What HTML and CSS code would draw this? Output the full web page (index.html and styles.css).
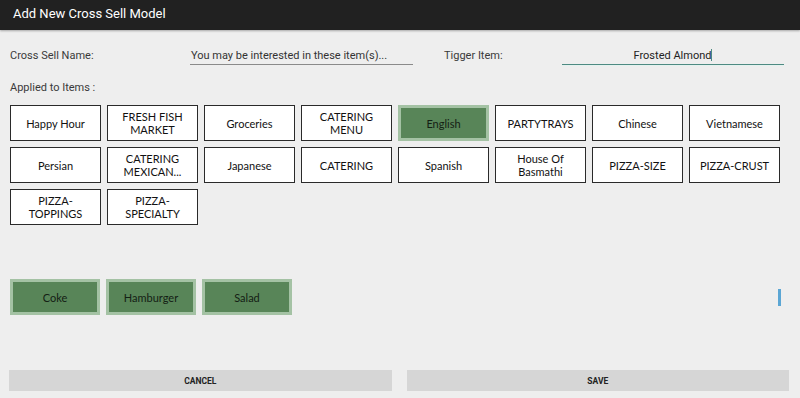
FILE: index.html
```html
<!DOCTYPE html>
<html lang="en">
<head>
    <meta charset="UTF-8">
    <meta name="viewport" content="width=device-width, initial-scale=1.0">
    <title>Add New Cross Sell Model</title>
    <link rel="stylesheet" href="styles.css">
</head>
<body>
    <header class="title-bar">Add New Cross Sell Model</header>

    <div class="form-row">
        <label class="field-label">Cross Sell Name:</label>
        <div class="field name-field">You may be interested in these item(s)...</div>
        <label class="field-label trigger-label">Tigger Item:</label>
        <div class="field trigger-field">Frosted Almond<span class="caret"></span></div>
    </div>

    <div class="section-label">Applied to Items :</div>

    <div class="tile-grid">
        <div class="tile">Happy Hour</div>
        <div class="tile">FRESH FISH MARKET</div>
        <div class="tile">Groceries</div>
        <div class="tile">CATERING MENU</div>
        <div class="tile selected">English</div>
        <div class="tile">PARTYTRAYS</div>
        <div class="tile">Chinese</div>
        <div class="tile">Vietnamese</div>
        <div class="tile">Persian</div>
        <div class="tile">CATERING MEXICAN...</div>
        <div class="tile">Japanese</div>
        <div class="tile">CATERING</div>
        <div class="tile">Spanish</div>
        <div class="tile">House Of Basmathi</div>
        <div class="tile">PIZZA-SIZE</div>
        <div class="tile">PIZZA-CRUST</div>
        <div class="tile">PIZZA-<br>TOPPINGS</div>
        <div class="tile">PIZZA-<br>SPECIALTY</div>
    </div>

    <div class="picked-row">
        <div class="tile selected">Coke</div>
        <div class="tile selected">Hamburger</div>
        <div class="tile selected">Salad</div>
        <span class="scroll-mark"></span>
    </div>

    <div class="footer">
        <button class="action">CANCEL</button>
        <button class="action">SAVE</button>
    </div>
</body>
</html>
```

FILE: styles.css
```css
body {
    margin: 0;
    padding: 0;
    background-color: #eeeeee;
    font-family: Roboto, "Liberation Sans", sans-serif;
    color: #333333;
    height: 398px;
    overflow: hidden;
}
.title-bar {
    height: 30px;
    line-height: 28px;
    background: #212121;
    color: #ffffff;
    font-size: 13px;
    padding-left: 13px;
    box-shadow: 0 1px 2px rgba(0,0,0,0.3);
}
.form-row {
    display: flex;
    align-items: flex-start;
    margin-top: 18px;
    padding-left: 10px;
}
.field-label {
    font-size: 11px;
    width: 180px;
    line-height: 16px;
    color: #3a3a3a;
}
.trigger-label {
    width: 118px;
    margin-left: 31px;
}
.field {
    font-size: 11px;
    line-height: 16px;
    color: #333333;
    width: 222px;
    border-bottom: 1px solid #8a8a8a;
}
.name-field {
    padding-left: 1px;
}
.trigger-field {
    text-align: center;
    color: #222222;
    border-bottom: 1px solid #4e8a82;
    box-shadow: 0 1px 0 #e4f2ef;
}
.caret {
    display: inline-block;
    width: 1px;
    height: 12px;
    background: #4e8a82;
    vertical-align: -2px;
}
.section-label {
    font-size: 11px;
    color: #3a3a3a;
    padding-left: 10px;
    margin-top: 16px;
    line-height: 14px;
}
.tile-grid {
    display: grid;
    grid-template-columns: repeat(8, 91px);
    grid-auto-rows: 36px;
    column-gap: 6px;
    row-gap: 6px;
    padding-left: 10px;
    margin-top: 10px;
}
.tile {
    box-sizing: border-box;
    display: flex;
    align-items: center;
    justify-content: center;
    text-align: center;
    background: #ffffff;
    border: 1px solid #2a2a2a;
    font-family: Lato, "Open Sans", sans-serif;
    font-size: 11px;
    line-height: 13px;
    color: #111111;
    padding: 0 8px;
}
.tile.selected {
    background: #588558;
    border: 3px solid #a4c2a4;
    color: #142014;
}
.picked-row {
    display: flex;
    align-items: center;
    gap: 6px;
    padding-left: 10px;
    margin-top: 54px;
    height: 36px;
}
.picked-row .tile {
    width: 90px;
    height: 36px;
}
.scroll-mark {
    width: 3px;
    height: 17px;
    background: #5ba6d4;
    margin-left: auto;
    margin-right: 19px;
}
.footer {
    display: flex;
    gap: 15px;
    padding: 0 11px 0 9px;
    margin-top: 55px;
}
.action {
    flex: 1;
    height: 21px;
    border: none;
    background: #d6d6d6;
    font-family: Roboto, "Liberation Sans", sans-serif;
    font-weight: bold;
    font-size: 8.5px;
    color: #222222;
    padding: 0;
}
```
